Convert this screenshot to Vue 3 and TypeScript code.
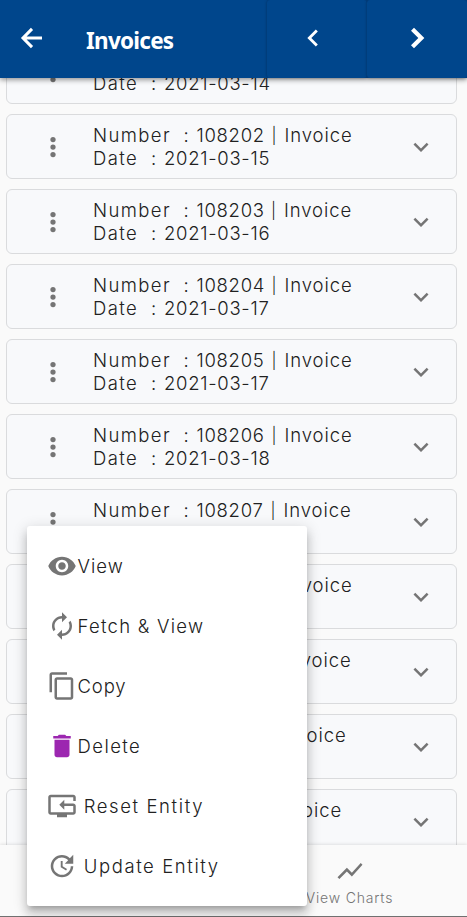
<script setup lang="ts">
interface Invoice { number: string; date: string; numberWidth: number }
interface Action { label: string; icon: string; tracking: number; spaced?: boolean; accent?: boolean }

const invoices: Invoice[] = [
  { number: '108201', date: '2021-03-14', numberWidth: 83 },
  { number: '108202', date: '2021-03-15', numberWidth: 88 },
  { number: '108203', date: '2021-03-16', numberWidth: 87.5 },
  { number: '108204', date: '2021-03-17', numberWidth: 88 },
  { number: '108205', date: '2021-03-17', numberWidth: 88 },
  { number: '108206', date: '2021-03-18', numberWidth: 88 },
  { number: '108207', date: '', numberWidth: 87 },
  { number: '108208', date: '', numberWidth: 88 },
  { number: '108209', date: '', numberWidth: 87 },
  { number: '108210', date: '', numberWidth: 82 },
  { number: '108211', date: '', numberWidth: 77.5 },
]

const actions: Action[] = [
  { label: 'View', tracking: 1, icon: 'M12 4.5C7 4.5 2.73 7.61 1 12c1.73 4.39 6 7.5 11 7.5s9.27-3.11 11-7.5c-1.73-4.39-6-7.5-11-7.5zM12 17c-2.76 0-5-2.24-5-5s2.24-5 5-5 5 2.24 5 5-2.24 5-5 5zm0-8c-1.66 0-3 1.34-3 3s1.34 3 3 3 3-1.34 3-3-1.34-3-3-3z' },
  { label: 'Fetch & View', tracking: 1.25, icon: 'M12 6v3l4-4-4-4v3c-4.42 0-8 3.58-8 8 0 1.57.46 3.03 1.24 4.26L6.7 14.8c-.45-.83-.7-1.79-.7-2.8 0-3.31 2.69-6 6-6zm6.76 1.74L17.3 9.2c.44.84.7 1.79.7 2.8 0 3.31-2.69 6-6 6v-3l-4 4 4 4v-3c4.42 0 8-3.58 8-8 0-1.57-.46-3.03-1.24-4.26z' },
  { label: 'Copy', tracking: 0.8, icon: 'M16 1H4c-1.1 0-2 .9-2 2v14h2V3h12V1zm3 4H8c-1.1 0-2 .9-2 2v14c0 1.1.9 2 2 2h11c1.1 0 2-.9 2-2V7c0-1.1-.9-2-2-2zm0 16H8V7h11v14z' },
  { label: 'Delete', tracking: 1.4, accent: true, icon: 'M6 19c0 1.1.9 2 2 2h8c1.1 0 2-.9 2-2V7H6v12zM19 4h-3.5l-1-1h-5l-1 1H5v2h14V4z' },
  { label: 'Reset Entity', tracking: 1.6, spaced: true, icon: 'M21 8h2V5c0-1.1-.9-2-2-2H3c-1.1 0-2 .9-2 2v12c0 1.1.9 2 2 2h5v2h8v-2h5c1.1 0 2-.9 2-2v-5c0-1.1-.9-2-2-2h-7.17V7l-4 4 4 4v-3H21v5H3V5h18v3z' },
  { label: 'Update Entity', tracking: 1.6, spaced: true, icon: 'M21 10.12h-6.78l2.74-2.82c-2.73-2.7-7.15-2.8-9.88-.1-2.73 2.71-2.73 7.08 0 9.79s7.15 2.71 9.88 0C18.32 15.65 19 14.08 19 12.1h2c0 1.98-.88 4.55-2.64 6.29-3.51 3.48-9.21 3.48-12.72 0-3.5-3.47-3.53-9.11-.02-12.58s9.14-3.47 12.65 0L21 3v7.12zM12.5 8v4.25l3.5 2.08-.72 1.21L11 13V8h1.5z' },
]
</script>

<template>
  <div class="screen">
    <header class="toolbar">
      <div class="heading">
        <svg class="back" viewBox="0 0 24 24"><path d="M20 12H5.2M12 4.7L4.8 12l7.2 7.3" /></svg>
        <h1>Invoices</h1>
      </div>
      <button class="nav"><svg class="previous" viewBox="0 0 24 24"><path d="M15.41 7.41L14 6l-6 6 6 6 1.41-1.41L10.83 12z" /></svg></button>
      <button class="nav"><svg class="next" viewBox="0 0 24 24"><path d="M10.2 5.8L8.4 7.6 12.8 12l-4.4 4.4 1.8 1.8L16.4 12z" /></svg></button>
    </header>

    <main class="list">
      <article v-for="invoice in invoices" :key="invoice.number" class="card">
        <svg class="more" viewBox="0 0 24 24"><circle cx="12" cy="6" r="2.1" /><circle cx="12" cy="12" r="2.1" /><circle cx="12" cy="18" r="2.1" /></svg>
        <div class="details">
          <div class="line">
            <span class="number-label">Number</span><span class="colon">:</span>
            <span class="number" :style="{ width: invoice.numberWidth + 'px' }"><span>{{ invoice.number }}</span><span class="bar">|</span></span>
            <span class="word">Invoice</span>
          </div>
          <div v-if="invoice.date" class="line">
            <span class="date-label">Date</span><span class="colon">:</span><span class="date">{{ invoice.date }}</span>
          </div>
        </div>
        <svg class="expand" viewBox="0 0 24 24"><path d="M16.59 8.59L12 13.17 7.41 8.59 6 10l6 6 6-6z" /></svg>
      </article>
    </main>

    <footer class="bottom">
      <div class="charts">
        <svg viewBox="0 0 24 24"><path d="M3.5 18.49l6-6.01 4 4L22 6.92l-1.41-1.41-7.09 7.97-4-4L2 16.99z" /></svg>
        <span>View Charts</span>
      </div>
    </footer>

    <div class="menu">
      <div v-for="action in actions" :key="action.label" class="action" :class="{ spaced: action.spaced, accent: action.accent }">
        <svg viewBox="0 0 24 24"><path :d="action.icon" /></svg>
        <span class="label" :style="{ letterSpacing: action.tracking + 'px' }">{{ action.label }}</span>
      </div>
    </div>
  </div>
</template>

<style>
body { margin: 0; }
</style>

<style scoped>
* { box-sizing: border-box; }
.screen { position: relative; display: flex; flex-direction: column; width: 467px; height: 917px; overflow: hidden; background: #fafafa; font-family: Inter, sans-serif; font-weight: 300; color: #212121; }
svg { display: block; flex: none; width: 30px; height: 30px; fill: #757575; }
.toolbar { position: relative; z-index: 1; display: flex; flex: none; height: 78px; background: #00468c; box-shadow: 0 2px 5px rgba(0,0,0,.4); }
.heading { display: flex; align-items: center; width: 267px; padding: 0 0 2px 17px; }
.back { fill: none; stroke: #fff; stroke-width: 2.4; }
h1 { margin: 6px 0 0 39px; font: 700 22.5px/30px "Noto Sans", sans-serif; letter-spacing: -.75px; color: #fff; }
.nav { display: flex; justify-content: center; align-items: center; width: 100px; padding: 0 8px 2px 0; border: 0; border-radius: 3px; background: #00468c; box-shadow: 0 0 3px rgba(0,0,0,.35); }
.nav svg { fill: #fff; }
.nav .previous { width: 34px; height: 34px; }
.nav .next { width: 40px; height: 40px; margin-left: 8px; }
.list { display: flex; flex-direction: column; flex: none; gap: 10px; height: 806px; margin-top: -39px; padding: 0 10px 0 6px; overflow: hidden; }
.card { display: flex; flex: none; align-items: flex-start; height: 65px; padding: 17px 20px 0 30.5px; border: 1px solid #dadbdd; border-radius: 6px; background: #f8f9fb; }
.details { flex: 1; margin: -8px 0 0 25.5px; font-size: 18.5px; line-height: 23px; letter-spacing: .7px; white-space: nowrap; }
.line { display: flex; height: 23px; }
.number-label { width: 90.5px; letter-spacing: 1.4px; }
.date-label { width: 58px; letter-spacing: 1.4px; }
.colon { width: 13px; }
.number { display: flex; justify-content: space-between; }
.number .bar { width: 13px; font-size: 16px; }
.word { letter-spacing: .9px; }
.bottom { display: flex; flex: none; height: 72px; justify-content: flex-end; border-bottom: 1px solid #707070; background: #fafafa; box-shadow: 0 -1px 3px rgba(0,0,0,.1); z-index: 1; }
.charts { display: flex; flex-direction: column; align-items: center; width: 235px; padding-top: 11px; color: #757575; font-size: 14px; line-height: 24px; letter-spacing: .8px; }
.menu { position: absolute; z-index: 2; left: 27px; top: 526px; width: 280px; height: 380px; padding: 10px 20px; border-radius: 3px; background: #fff; box-shadow: 0 5px 5px -3px rgba(0,0,0,.2), 0 8px 10px 1px rgba(0,0,0,.14), 0 3px 14px 2px rgba(0,0,0,.12); }
.action { display: flex; align-items: center; height: 60px; font-size: 18.5px; }
.label { padding-left: .6px; }
.spaced .label { padding-left: 6.7px; }
.accent svg { fill: #9c27b0; }
</style>
